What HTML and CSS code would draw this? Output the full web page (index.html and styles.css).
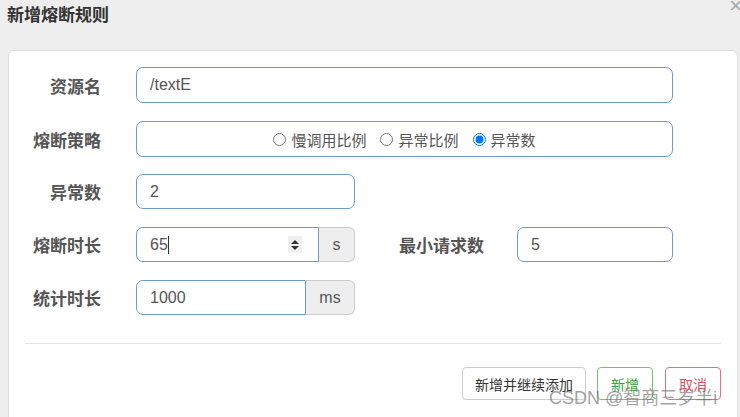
FILE: index.html
```html
<!DOCTYPE html>
<html lang="zh">
<head>
<meta charset="utf-8">
<title>新增熔断规则</title>
<link rel="stylesheet" href="styles.css">
</head>
<body>
<div class="dialog">
  <div class="title">新增熔断规则</div>
  <span class="close">×</span>
  <div class="panel">
    <div class="row r1">
      <div class="label">资源名</div>
      <div class="input w-full">/textE</div>
    </div>
    <div class="row r2">
      <div class="label">熔断策略</div>
      <div class="input w-full radios">
        <label class="radio"><input type="radio" name="s">慢调用比例</label>
        <label class="radio"><input type="radio" name="s">异常比例</label>
        <label class="radio"><input type="radio" name="s" checked>异常数</label>
      </div>
    </div>
    <div class="row r3">
      <div class="label">异常数</div>
      <div class="input w-mid">2</div>
    </div>
    <div class="row r4">
      <div class="label">熔断时长</div>
      <div class="group">
        <div class="input left w-s">
          <span class="val">65<span class="caret"></span></span>
          <span class="spin">
            <svg width="10" height="14" viewBox="0 0 10 14"><path d="M5 2 L9 6 L1 6 Z M5 12 L9 8 L1 8 Z" fill="#333"/></svg>
          </span>
        </div>
        <div class="addon a-s">s</div>
      </div>
      <div class="label2">最小请求数</div>
      <div class="input w-min">5</div>
    </div>
    <div class="row r5">
      <div class="label">统计时长</div>
      <div class="group">
        <div class="input left w-ms">1000</div>
        <div class="addon a-ms">ms</div>
      </div>
    </div>
    <div class="divider"></div>
    <div class="actions">
      <button class="btn wide">新增并继续添加</button>
      <button class="btn green">新增</button>
      <button class="btn red">取消</button>
    </div>
  </div>
  <div class="watermark">CSDN @智商三岁半i</div>
</div>
</body>
</html>
```
FILE: styles.css
```css
html, body {
  margin: 0;
  padding: 0;
  background: #eeeeee;
  overflow: hidden;
}
body {
  width: 740px;
  height: 417px;
  font-family: "Liberation Sans", "Noto Sans CJK SC", sans-serif;
}
.dialog {
  position: relative;
  height: 417px;
}
.title {
  padding: 3px 0 0 7px;
  height: 50px;
  box-sizing: border-box;
  font-family: "Noto Sans CJK SC", sans-serif;
  font-weight: bold;
  font-size: 17px;
  line-height: 22px;
  color: #333;
}
.close {
  position: absolute;
  top: -7px;
  right: -2px;
  font-size: 22px;
  color: #aaa;
  font-family: "Liberation Sans", sans-serif;
}
.panel {
  margin: 0 2px 0 8px;
  height: 380px;
  background: #fff;
  border: 1px solid #dcdcdc;
  border-radius: 6px;
  box-sizing: border-box;
  padding-top: 16px;
}
.row {
  display: flex;
  align-items: center;
  height: 35px;
  margin-bottom: 18px;
}
.r1, .r2 { height: 36px; }
.r2 { margin-bottom: 17px; }
.r5 { margin-bottom: 0; }
.label, .label2 {
  font-family: "Noto Sans CJK SC", sans-serif;
  font-weight: bold;
  font-size: 17px;
  color: #555;
}
.label {
  width: 92px;
  text-align: right;
  margin-right: 35px;
}
.label2 {
  margin-left: 44px;
  width: 87px;
  margin-right: 31px;
}
.input {
  box-sizing: border-box;
  height: 100%;
  border: 1px solid #6b9bd0;
  border-radius: 7px;
  padding-left: 13px;
  display: flex;
  align-items: center;
  font-size: 16px;
  color: #555;
}
.w-full { width: 537px; }
.w-mid { width: 219px; }
.w-min { width: 156px; }
.group {
  display: flex;
  height: 100%;
}
.input.left {
  border-radius: 7px 0 0 7px;
}
.w-s { width: 183px; }
.w-ms { width: 170px; }
.addon {
  box-sizing: border-box;
  height: 100%;
  background: #eeeeee;
  border: 1px solid #cccccc;
  border-left: none;
  border-radius: 0 6px 6px 0;
  display: flex;
  align-items: center;
  justify-content: center;
  font-size: 16px;
  color: #555;
}
.a-s { width: 36px; }
.a-ms { width: 49px; }
.val {
  flex: 1;
  display: flex;
  align-items: center;
}
.caret {
  display: inline-block;
  width: 1px;
  height: 18px;
  background: #333;
}
.spin {
  width: 14px;
  height: 17px;
  background: #f0f0f0;
  margin-right: 16px;
  display: flex;
  align-items: center;
  justify-content: center;
}
.radios {
  justify-content: center;
  padding-left: 0;
  font-family: "Noto Sans CJK SC", sans-serif;
  font-size: 15px;
  color: #555;
}
.radio {
  display: flex;
  align-items: center;
  margin-right: 14px;
}
.radio:last-child { margin-right: 0; }
.radio input {
  width: 13px;
  height: 13px;
  margin: 0 5px 0 0;
}
.divider {
  height: 1px;
  background: #e5e5e5;
  margin: 28px 16px 0 16px;
}
.actions {
  display: flex;
  justify-content: flex-end;
  padding-right: 16px;
  margin-top: 23px;
}
.btn {
  width: 56px;
  height: 33px;
  padding: 0;
  margin-left: 12px;
  background: #fff;
  border: 1px solid #cccccc;
  border-radius: 4px;
  font-family: "Noto Sans CJK SC", sans-serif;
  font-size: 14px;
  color: #333;
}
.btn.wide {
  width: 124px;
}
.btn.green {
  margin-left: 11px;
  border-color: #6fc46f;
  color: #3aa33a;
}
.btn.red {
  border-color: #e7707e;
  color: #e0505e;
}
.watermark {
  position: absolute;
  left: 549px;
  top: 383px;
  font-family: "Liberation Sans", "Noto Sans CJK SC", sans-serif;
  font-size: 18px;
  color: rgba(110, 110, 110, 0.65);
  white-space: nowrap;
}
```
